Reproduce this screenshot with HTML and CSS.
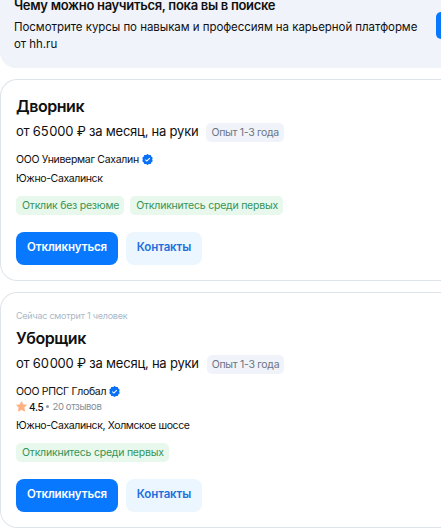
FILE: index.html
```html
<!DOCTYPE html>
<html lang="ru">
<head>
    <meta charset="UTF-8">
    <meta name="viewport" content="width=device-width, initial-scale=1.0">
    <title>Вакансии</title>
    <link rel="stylesheet" href="styles.css">
</head>
<body>
    <div class="page">
        <section class="banner">
            <div class="banner-content">
                <h3 class="banner-title">Чему можно научиться, пока вы в поиске</h3>
                <p class="banner-text">Посмотрите курсы по навыкам и профессиям на карьерной платформе <span class="banner-source">от hh.ru</span></p>
            </div>
            <button class="banner-button" aria-label="Посмотреть"></button>
        </section>

        <article class="card">
            <h2 class="title">Дворник</h2>
            <div class="salary-row">
                <span class="salary">от 65&#8202;000 ₽ за месяц, на руки</span>
                <span class="tag tag-gray">Опыт 1-3 года</span>
            </div>
            <div class="company">
                <span class="company-name">ООО Универмаг Сахалин</span>
                <svg class="verified" viewBox="0 0 12 12">
                    <path fill="#0870f8" d="M6 0l1.6 1.1 1.9-.1.6 1.8L11.7 4l-.6 2 .6 2-1.6 1.2-.6 1.8-1.9-.1L6 12l-1.6-1.1-1.9.1-.6-1.8L.3 8l.6-2-.6-2 1.6-1.2L2.5 1l1.9.1z"/>
                    <path fill="none" stroke="#fff" stroke-width="1.2" d="M3.6 6.1l1.7 1.6 3.2-3.2"/>
                </svg>
            </div>
            <div class="address">Южно-Сахалинск</div>
            <div class="tags">
                <span class="tag tag-green">Отклик без резюме</span>
                <span class="tag tag-green">Откликнитесь среди первых</span>
            </div>
            <div class="actions">
                <button class="btn btn-primary">Откликнуться</button>
                <button class="btn btn-secondary">Контакты</button>
            </div>
        </article>

        <article class="card card-second">
            <div class="viewers">Сейчас смотрит 1 человек</div>
            <h2 class="title">Уборщик</h2>
            <div class="salary-row">
                <span class="salary">от 60&#8202;000 ₽ за месяц, на руки</span>
                <span class="tag tag-gray">Опыт 1-3 года</span>
            </div>
            <div class="company">
                <span class="company-name">ООО РПСГ Глобал</span>
                <svg class="verified" viewBox="0 0 12 12">
                    <path fill="#0870f8" d="M6 0l1.6 1.1 1.9-.1.6 1.8L11.7 4l-.6 2 .6 2-1.6 1.2-.6 1.8-1.9-.1L6 12l-1.6-1.1-1.9.1-.6-1.8L.3 8l.6-2-.6-2 1.6-1.2L2.5 1l1.9.1z"/>
                    <path fill="none" stroke="#fff" stroke-width="1.2" d="M3.6 6.1l1.7 1.6 3.2-3.2"/>
                </svg>
            </div>
            <div class="rating">
                <svg class="star" viewBox="0 0 12 12">
                    <path fill="#ffb182" stroke="#ffb182" stroke-linejoin="round" d="M6 .8l1.6 3.3 3.7.5-2.7 2.6.7 3.8L6 9.2 2.7 11l.7-3.8L.7 4.6l3.7-.5z"/>
                </svg>
                <span class="score">4.5</span>
                <span class="dot"></span>
                <span class="reviews">20 отзывов</span>
            </div>
            <div class="address">Южно-Сахалинск, Холмское шоссе</div>
            <div class="tags">
                <span class="tag tag-green">Откликнитесь среди первых</span>
            </div>
            <div class="actions">
                <button class="btn btn-primary">Откликнуться</button>
                <button class="btn btn-secondary">Контакты</button>
            </div>
        </article>
    </div>
</body>
</html>
```
FILE: styles.css
```css
* {
    box-sizing: border-box;
}

body {
    margin: 0;
    height: 530px;
    overflow: hidden;
    background-color: #fff;
    color: #101010;
    font-family: Inter, "Liberation Sans", Arial, sans-serif;
}

h2, h3, p {
    margin: 0;
}

button {
    border: none;
    font-family: inherit;
    cursor: pointer;
}

.page {
    width: 100%;
}

/* Banner */
.banner {
    display: flex;
    align-items: flex-start;
    height: 68px;
    padding-left: 14px;
    background-color: #f0f3f9;
    border-radius: 0 0 0 16px;
}

.banner-content {
    width: 422px;
    flex-shrink: 0;
}

.banner-title {
    margin-top: -4px;
    font-size: 13px;
    line-height: 18px;
    font-weight: 600;
    letter-spacing: -0.3px;
    white-space: nowrap;
}

.banner-text {
    margin-top: 5px;
    font-size: 11.5px;
    line-height: 17px;
    letter-spacing: -0.05px;
    white-space: nowrap;
}

.banner-source {
    display: block;
}

.banner-button {
    flex: 1;
    height: 27px;
    margin-top: 12px;
    padding: 0;
    border-radius: 8px 0 0 8px;
    background-color: #0878ff;
}

/* Vacancy cards */
.card {
    height: 202px;
    margin-top: 11px;
    padding: 15px 15px;
    border: 1px solid #dfe4ea;
    border-right: none;
    border-radius: 17px 0 0 17px;
}

.card-second {
    height: 236px;
}

.viewers {
    height: 15px;
    margin-bottom: 4px;
    font-size: 9px;
    line-height: 15px;
    letter-spacing: -0.23px;
    color: #aab8c8;
}

.title {
    font-size: 16px;
    line-height: 22px;
    font-weight: 600;
    letter-spacing: -0.45px;
}

.salary-row {
    display: flex;
    align-items: center;
    gap: 8px;
    height: 20px;
    margin-top: 5px;
}

.salary {
    padding-bottom: 1px;
    font-size: 13px;
    line-height: 19px;
    letter-spacing: -0.22px;
    white-space: nowrap;
}

.tag {
    height: 19px;
    padding: 0 5px 0 6px;
    border-radius: 5px;
    font-size: 10.5px;
    line-height: 19px;
    letter-spacing: -0.22px;
    white-space: nowrap;
}

.tag-gray {
    padding-left: 5px;
    background-color: #f0f3f9;
    color: #6a7585;
    letter-spacing: -0.3px;
}

.tag-green {
    background-color: #e8f8ec;
    color: #369457;
}

.company {
    display: flex;
    align-items: center;
    gap: 3px;
    height: 16px;
    margin-top: 9px;
    font-size: 10.5px;
    letter-spacing: -0.31px;
    white-space: nowrap;
}

.verified {
    width: 11px;
    height: 11px;
}

.rating {
    display: flex;
    align-items: center;
    height: 15px;
    font-size: 10px;
}

.star {
    width: 11px;
    height: 11px;
    margin-right: 2px;
}

.score {
    font-weight: 500;
    letter-spacing: -0.3px;
}

.dot {
    width: 3px;
    height: 3px;
    margin: 0 3px;
    border-radius: 50%;
    background-color: #9299a5;
}

.reviews {
    font-size: 9.5px;
    letter-spacing: -0.35px;
    color: #858d99;
}

.address {
    height: 16px;
    margin-top: 4px;
    font-size: 10.5px;
    line-height: 16px;
    letter-spacing: -0.38px;
}

.tags {
    display: flex;
    gap: 6px;
    margin-top: 9px;
}

.actions {
    display: flex;
    gap: 8px;
    margin-top: 17px;
}

.btn {
    height: 33px;
    padding: 0 0 2px;
    border-radius: 8px;
    font-size: 11.5px;
    font-weight: 600;
    line-height: 31px;
    letter-spacing: -0.12px;
}

.btn-primary {
    width: 102px;
    background-color: #0878ff;
    color: #fff;
}

.btn-secondary {
    width: 76px;
    background-color: #ebf6ff;
    color: #226fdb;
}
```
